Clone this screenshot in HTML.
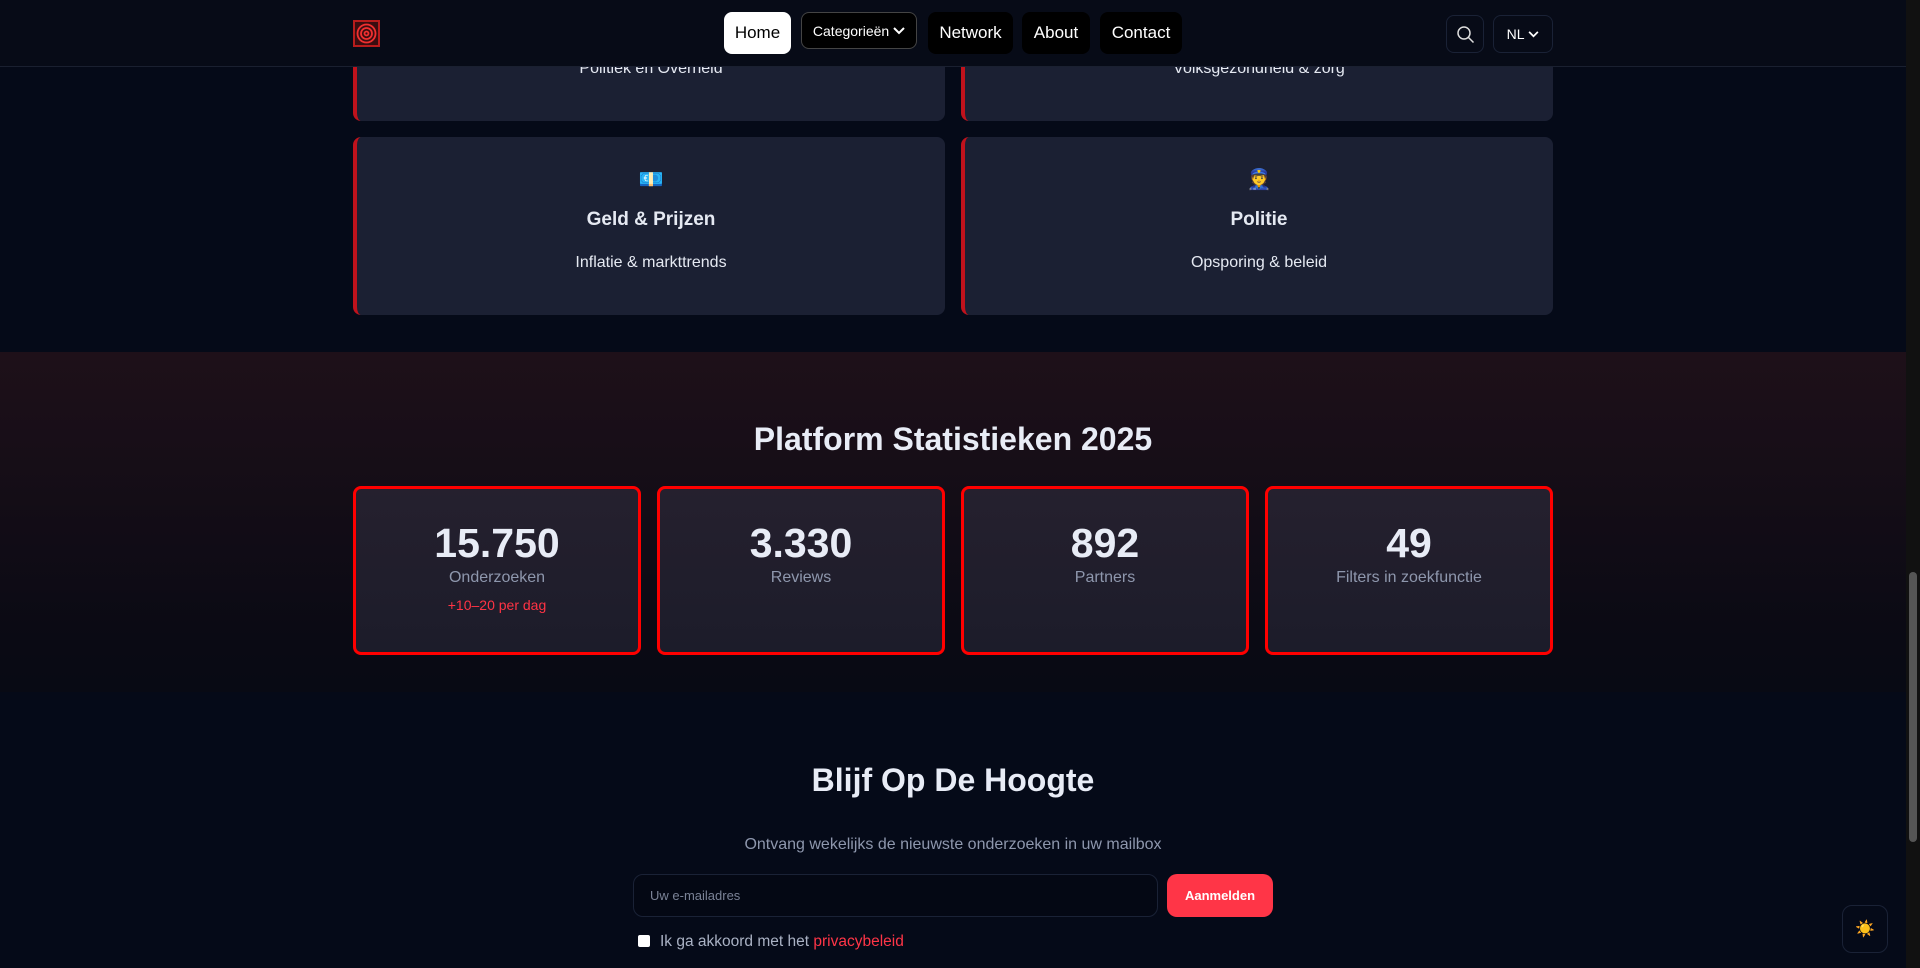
<!DOCTYPE html>
<html><head><meta charset="utf-8"><style>
*{box-sizing:border-box;margin:0;padding:0}
body{width:1920px;height:968px;overflow:hidden;background:#050a18;font-family:"Liberation Sans",sans-serif;color:#e5e9f2;position:relative}
.hdr{position:absolute;left:0;top:0;width:1906px;height:67px;background:#070b17;border-bottom:1px solid #1a2030;z-index:5}
.logo{position:absolute;left:353px;top:20px;width:27px;height:27px;border:2px solid #b71c1c;background:#3a0d10}
.nav a{position:absolute;top:12px;height:42px;border-radius:8px;background:#000;color:#fff;font-size:17px;display:flex;align-items:center;justify-content:center;text-decoration:none}
.card{position:absolute;background:#1b2033;border-radius:8px;border-left:4px solid #c0121c;text-align:center}
.card .e{position:absolute;left:0;right:0;top:30px;font-size:20px}
.card h3{position:absolute;left:0;right:0;top:72px;font-size:19px;font-weight:bold}
.card p{position:absolute;left:0;right:0;top:117px;font-size:16px}
.stats{position:absolute;left:0;top:352px;width:1906px;height:340px;background:linear-gradient(#1e1019,#0a0a14 85%,#080a14)}
.sc{position:absolute;top:486px;height:169px;width:288px;border:3px solid #f00;border-radius:8px;background:linear-gradient(#25202e,#1c1c2a);text-align:center}
.sc b{display:block;margin-top:31px;font-size:41px;color:#e8ecf6}
.sc span{display:block;margin-top:2px;font-size:16px;color:#8e97ad}
.sc i{display:block;font-style:normal;margin-top:10px;font-size:14px;color:#ff3344}
</style></head><body>
<div class="card" style="left:353px;top:40px;width:592px;height:81px"><p style="top:20px">Politiek en Overheid</p></div>
<div class="card" style="left:961px;top:40px;width:592px;height:81px"><p style="top:20px">Volksgezondheid &amp; zorg</p></div>
<div class="hdr">
<div class="logo"><svg width="23" height="23" viewBox="0 0 23 23" style="display:block"><g fill="none" stroke="#f03030" stroke-width="1.8"><circle cx="11.5" cy="11.5" r="9"/><circle cx="11.5" cy="11.5" r="5.5"/><circle cx="11.5" cy="11.5" r="2"/></g></svg></div>
<div class="nav">
<a style="left:724px;width:67px;background:#fff;color:#000">Home</a>
<a style="left:801px;width:116px;height:37px;font-size:14px;border:1px solid #444">Categorieën&nbsp;<svg width="12" height="8" viewBox="0 0 12 8"><path d="M1 1l5 5 5-5" stroke="#fff" stroke-width="2" fill="none"/></svg></a>
<a style="left:928px;width:85px">Network</a>
<a style="left:1022px;width:68px">About</a>
<a style="left:1100px;width:82px">Contact</a>
</div>
<div style="position:absolute;left:1446px;top:15px;width:38px;height:38px;border:1px solid #1a2236;border-radius:8px"><svg width="38" height="38" viewBox="0 0 38 38"><circle cx="17" cy="17" r="6" fill="none" stroke="#ddd" stroke-width="1.5"/><path d="M21.5 21.5l5 5" stroke="#ddd" stroke-width="1.5"/></svg></div>
<div style="position:absolute;left:1493px;top:15px;width:60px;height:38px;border:1px solid #1a2236;border-radius:8px;font-size:14px;display:flex;align-items:center;justify-content:center;color:#fff">NL&nbsp;<svg width="11" height="7" viewBox="0 0 12 8"><path d="M1 1l5 5 5-5" stroke="#fff" stroke-width="2" fill="none"/></svg></div>
</div>
<div class="card" style="left:353px;top:137px;width:592px;height:178px"><div class="e">💶</div><h3>Geld &amp; Prijzen</h3><p>Inflatie &amp; markttrends</p></div>
<div class="card" style="left:961px;top:137px;width:592px;height:178px"><div class="e">👮</div><h3>Politie</h3><p>Opsporing &amp; beleid</p></div>
<div class="stats"></div>
<div style="position:absolute;left:0;width:1906px;top:421px;text-align:center;font-size:32px;font-weight:bold;color:#e8ecf6">Platform Statistieken 2025</div>
<div class="sc" style="left:353px"><b>15.750</b><span>Onderzoeken</span><i>+10–20 per dag</i></div>
<div class="sc" style="left:657px"><b>3.330</b><span>Reviews</span></div>
<div class="sc" style="left:961px"><b>892</b><span>Partners</span></div>
<div class="sc" style="left:1265px"><b>49</b><span>Filters in zoekfunctie</span></div>
<div style="position:absolute;left:0;width:1906px;top:762px;text-align:center;font-size:32px;font-weight:bold;color:#e8ecf6">Blijf Op De Hoogte</div>
<div style="position:absolute;left:0;width:1906px;top:836px;text-align:center;font-size:16px;color:#8e97ad">Ontvang wekelijks de nieuwste onderzoeken in uw mailbox</div>
<div style="position:absolute;left:633px;top:874px;width:525px;height:43px;border:1px solid #1a2236;border-radius:10px;background:#040814;font-size:13px;color:#7a8296;padding:13px 0 0 16px">Uw e-mailadres</div>
<div style="position:absolute;left:1167px;top:874px;width:106px;height:43px;border-radius:10px;background:#ff3547;color:#fff;font-size:13px;font-weight:bold;display:flex;align-items:center;justify-content:center">Aanmelden</div>
<div style="position:absolute;left:638px;top:935px;width:12px;height:12px;background:#fff;border-radius:2px"></div>
<div style="position:absolute;left:660px;top:933px;font-size:15.5px;color:#aab2c4">Ik ga akkoord met het <span style="color:#ff3547">privacybeleid</span></div>
<div style="position:absolute;left:1842px;top:905px;width:46px;height:48px;border:1px solid #1a2236;border-radius:10px;background:#050a18;display:flex;align-items:center;justify-content:center;font-size:16px">☀️</div>
<div style="position:absolute;left:1906px;top:0;width:14px;height:968px;background:#111"></div>
<div style="position:absolute;left:1909px;top:572px;width:8px;height:270px;background:#555;border-radius:4px"></div>
</body></html>
